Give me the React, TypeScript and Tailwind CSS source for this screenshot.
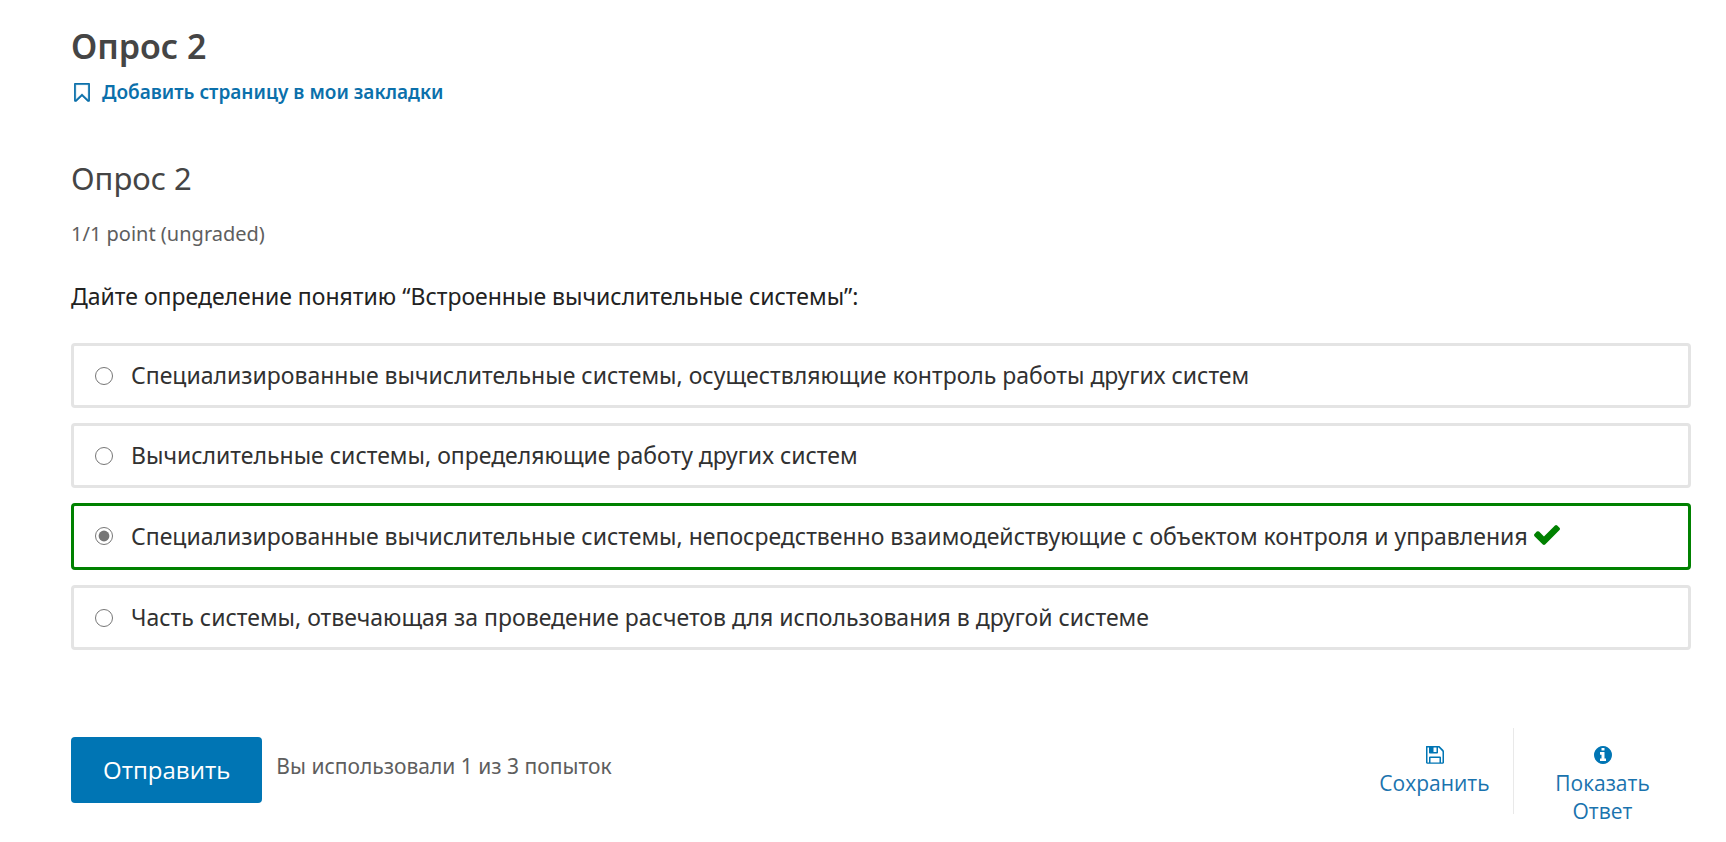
import { useState } from 'react';

const options = [
  'Специализированные вычислительные системы, осуществляющие контроль работы других систем',
  'Вычислительные системы, определяющие работу других систем',
  'Специализированные вычислительные системы, непосредственно взаимодействующие с объектом контроля и управления',
  'Часть системы, отвечающая за проведение расчетов для использования в другой системе',
];

const CORRECT = 2;

function BookmarkIcon() {
  return (
    <svg viewBox="256 128 1280 1536" className="h-[19px] w-4 shrink-0 fill-current stroke-current" strokeWidth="50" aria-hidden="true">
      <path d="M1408 256h-1024v1242l423-406 89-85 89 85 423 406v-1242zm12-128q23 0 44 9 33 13 52.5 41t19.5 62v1289q0 34-19.5 62t-52.5 41q-19 8-44 8-48 0-83-32l-441-424-441 424q-36 33-83 33-23 0-44-9-33-13-52.5-41t-19.5-62v-1289q0-34 19.5-62t52.5-41q21-9 44-9h1048z" />
    </svg>
  );
}

function CheckIcon() {
  return (
    <svg viewBox="120 330 1552 1194" className="inline h-5 w-[26px] fill-[#008100] align-baseline" aria-hidden="true">
      <path d="M1671 566q0 40-28 68l-724 724-136 136q-28 28-68 28t-68-28l-136-136-362-362q-28-28-28-68t28-68l136-136q28-28 68-28t68 28l294 295 656-657q28-28 68-28t68 28l136 136q28 28 28 68z" />
    </svg>
  );
}

function SaveIcon() {
  return (
    <svg viewBox="128 128 1536 1536" className="size-[18px] fill-[#0075b4]" aria-hidden="true">
      <path d="M512 1536h768v-384h-768v384zm896 0h128v-896q0-14-10-38.5t-20-34.5l-281-281q-10-10-34-20t-39-10v416q0 40-28 68t-68 28h-576q-40 0-68-28t-28-68v-416h-128v1280h128v-416q0-40 28-68t68-28h832q40 0 68 28t28 68v416zm-384-928v-320q0-13-9.5-22.5t-22.5-9.5h-192q-13 0-22.5 9.5t-9.5 22.5v320q0 13 9.5 22.5t22.5 9.5h192q13 0 22.5-9.5t9.5-22.5zm640 32v896q0 40-28 68t-68 28h-1344q-40 0-68-28t-28-68v-1344q0-40 28-68t68-28h928q40 0 88 20t76 48l280 280q28 28 48 76t20 88z" />
    </svg>
  );
}

function InfoIcon() {
  return (
    <svg viewBox="128 128 1536 1536" className="size-[18px] fill-[#0075b4]" aria-hidden="true">
      <path d="M1152 1376v-160q0-14-9-23t-23-9h-96v-512q0-14-9-23t-23-9h-320q-14 0-23 9t-9 23v160q0 14 9 23t23 9h96v320h-96q-14 0-23 9t-9 23v160q0 14 9 23t23 9h448q14 0 23-9t9-23zm-128-896v-160q0-14-9-23t-23-9h-192q-14 0-23 9t-9 23v160q0 14 9 23t23 9h192q14 0 23-9t9-23zm640 416q0 209-103 385.5t-279.5 279.5-385.5 103-385.5-103-279.5-279.5-103-385.5 103-385.5 279.5-279.5 385.5-103 385.5 103 279.5 279.5 103 385.5z" />
    </svg>
  );
}

export default function App() {
  const [selected, setSelected] = useState(CORRECT);

  return (
    <main className="bg-white pt-[26px] pr-[35px] pb-4 pl-[71px] font-['Noto_Sans',sans-serif]">
      <h1 className="text-[34px] leading-10 font-semibold text-[#454545]">Опрос 2</h1>
      <button type="button" className="mt-3 flex items-center gap-3 pl-[3px] text-[19px] leading-7 font-semibold text-[#0b70ab]">
        <BookmarkIcon />
        Добавить страницу в мои закладки
      </button>

      <h2 className="mt-[52px] text-[31px] leading-10 text-[#454545]">Опрос 2</h2>
      <p className="mt-[22px] text-xl leading-7 text-[#5e5e5e]">1/1 point (ungraded)</p>

      <form onSubmit={(event) => event.preventDefault()}>
        <fieldset className="mt-8">
          <legend className="text-[23px] leading-8 text-[#222222]">
            Дайте определение понятию “Встроенные вычислительные системы”:
          </legend>
          <div className="mt-[31px] flex flex-col gap-[15px]">
            {options.map((text, index) => {
              const marked = selected === index && index === CORRECT;
              return (
                <label
                  key={text}
                  className={
                    marked
                      ? 'flex items-start gap-[18px] rounded border-3 border-[#008100] py-[13px] pl-[21px] text-[23px] leading-[35px] text-[#313131]'
                      : 'flex items-start gap-[18px] rounded border-3 border-[#e4e4e4] py-[13px] pl-[21px] text-[23px] leading-[33px] text-[#313131]'
                  }
                >
                  <input
                    type="radio"
                    name="answer"
                    checked={selected === index}
                    onChange={() => setSelected(index)}
                    className="mt-2 size-[18px] shrink-0 accent-[#767676]"
                  />
                  <span>
                    {text} {marked && <CheckIcon />}
                  </span>
                </label>
              );
            })}
          </div>
        </fieldset>

        <div className="mt-[78px] flex items-start justify-between font-['Open_Sans',sans-serif]">
          <div className="flex items-start gap-[14px] pt-[9px]">
            <button type="submit" className="h-[66px] rounded bg-[#0075b4] px-8 text-2xl text-white">
              Отправить
            </button>
            <p className="pt-[15px] font-['Noto_Sans',sans-serif] text-[21px] leading-7 text-[#5e5e5e]">
              Вы использовали 1 из 3 попыток
            </p>
          </div>
          <div className="flex items-start text-[21px] leading-7 text-[#1a73ae]">
            <button type="button" className="flex h-[86px] w-[158px] flex-col items-center gap-[5px] border-r border-[#e9e9e9] pt-[18px]">
              <SaveIcon />
              Сохранить
            </button>
            <button type="button" className="flex w-[177px] flex-col items-center gap-[5px] px-8 pt-[18px]">
              <InfoIcon />
              <span>Показать Ответ</span>
            </button>
          </div>
        </div>
      </form>
    </main>
  );
}
